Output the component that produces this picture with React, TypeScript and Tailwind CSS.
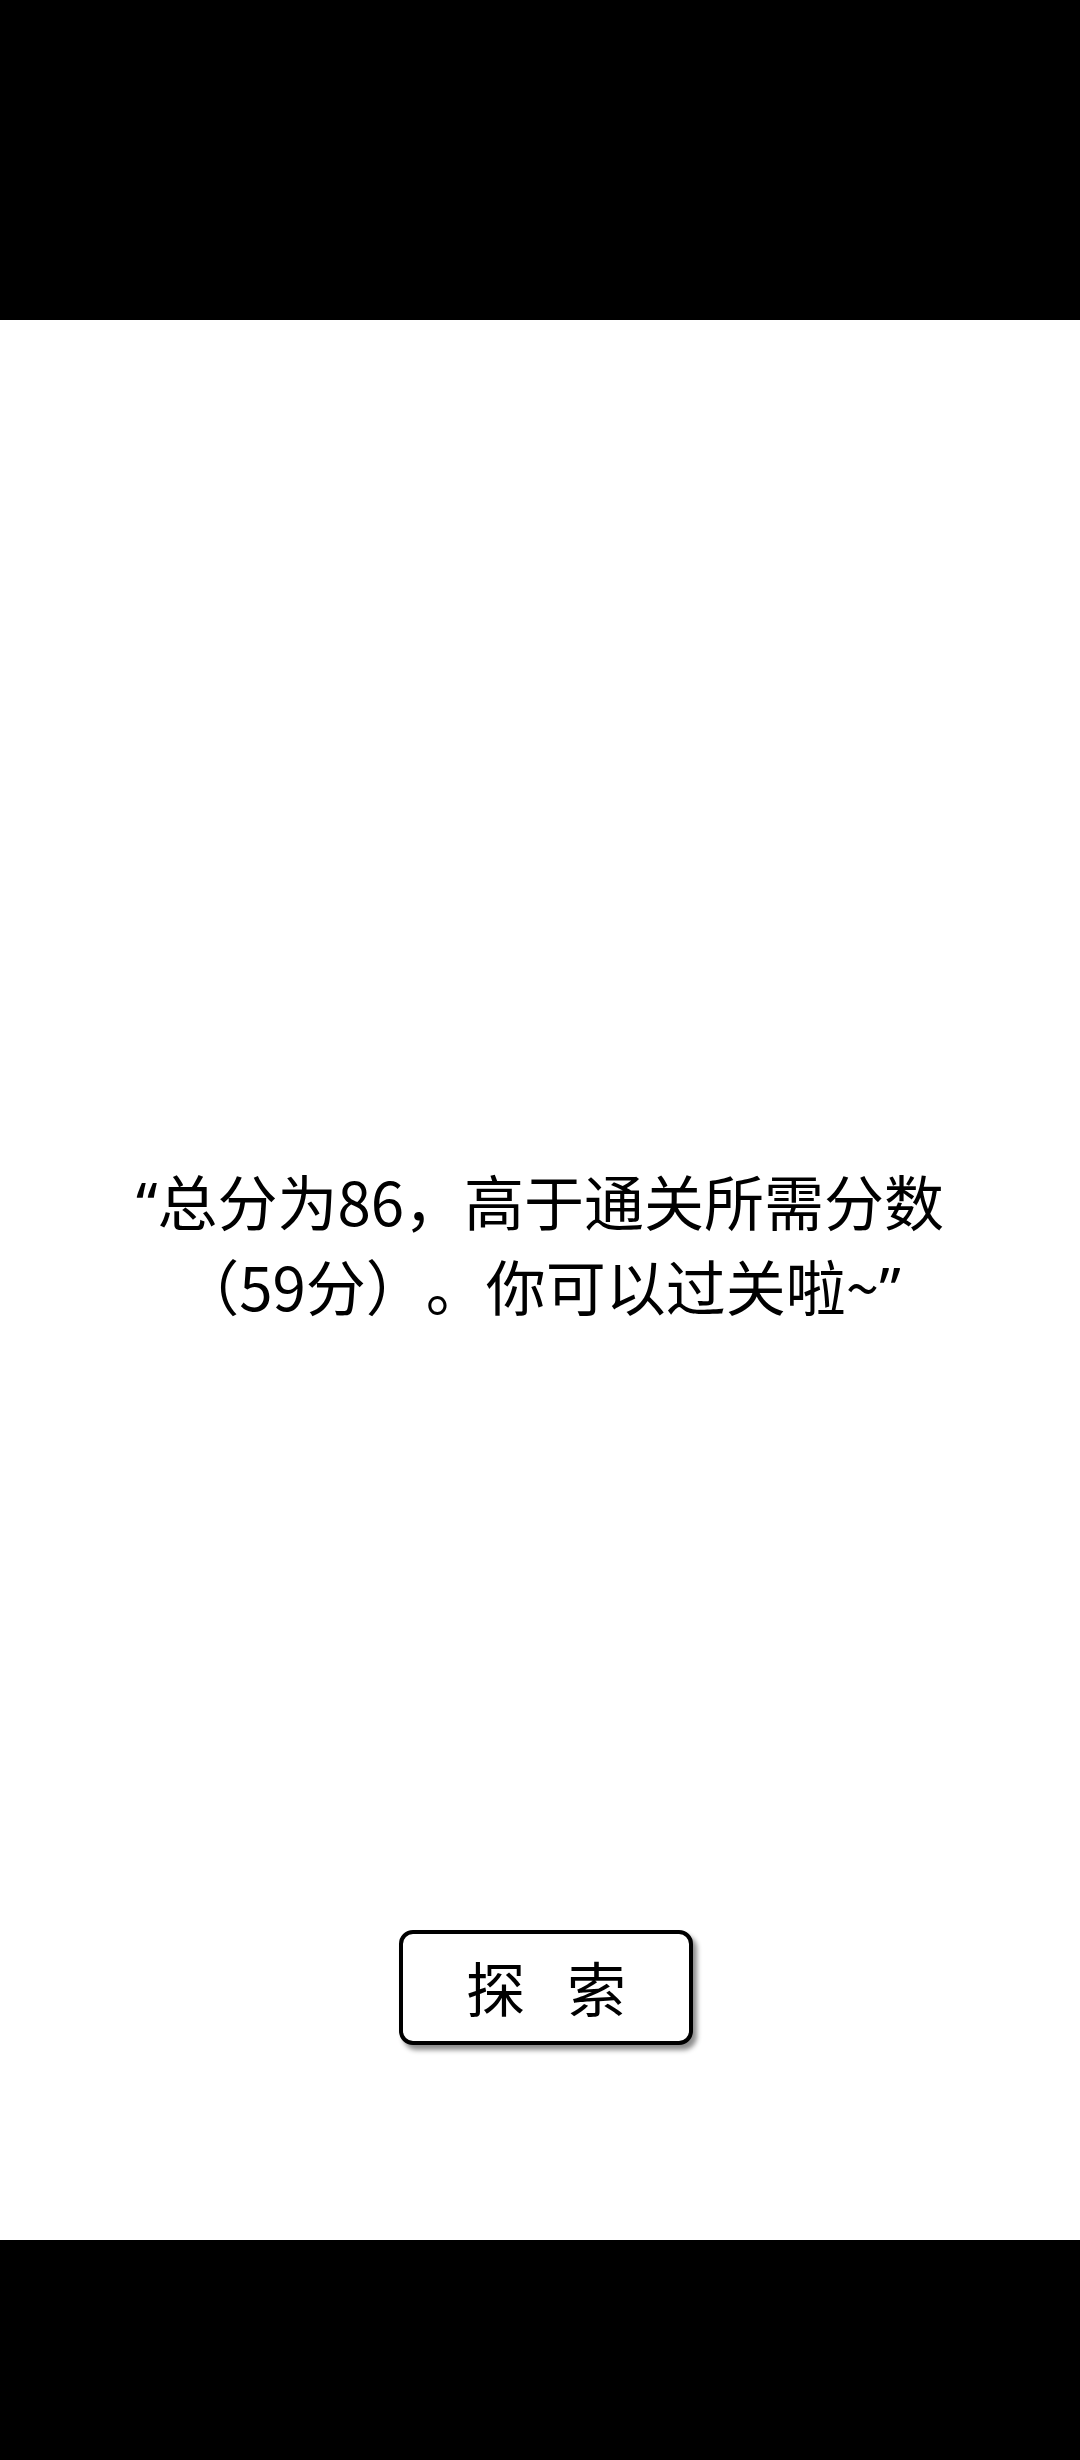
export default function App() {
  return (
    <div
      className="w-[1080px] h-[2460px] flex flex-col bg-white"
      style={{ fontFamily: '"Noto Sans CJK SC", "Noto Sans", sans-serif' }}
    >
      <div className="h-[320px] bg-black shrink-0" />
      <main className="flex-1 flex flex-col items-center">
        <p className="mt-[839px] h-[164px] text-[60px] leading-[82px] text-black text-center [text-spacing-trim:space-all] whitespace-nowrap">
          <span className="font-['Noto_Sans']">“</span>总分为86，高于通关所需分数
          <br />
          （59分）。你可以过关啦~<span className="font-['Noto_Sans']">”</span>
        </p>
        <button className="mt-[607px] ml-[12px] w-[294px] h-[115px] border-[4px] border-black rounded-[14px] bg-white shadow-[4px_5px_5px_rgba(0,0,0,0.45)] flex items-center justify-center gap-[42px] text-[59px] text-black">
          <span>探</span>
          <span>索</span>
        </button>
      </main>
      <div className="h-[220px] bg-black shrink-0" />
    </div>
  );
}
